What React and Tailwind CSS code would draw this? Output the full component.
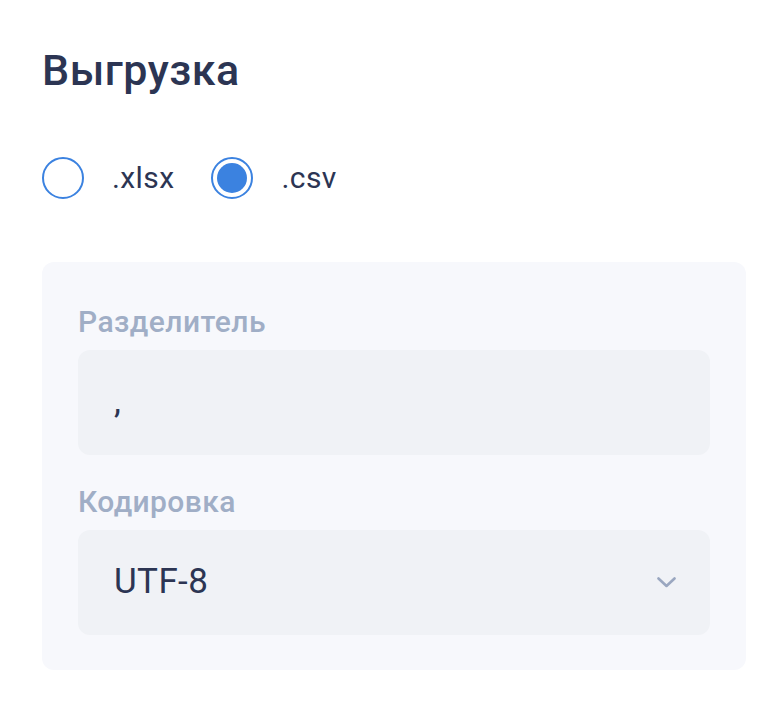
export default function App() {
  return (
    <div className="min-h-[704px] w-[784px] bg-white pl-[42px] pt-[49px]" style={{ fontFamily: "Roboto, 'Noto Sans', sans-serif" }}>
      <h1 className="text-[43px] font-medium leading-[42px] tracking-[0.5px] text-[#2c3553]">Выгрузка</h1>
      <div className="mt-[66px] flex items-center">
        <label className="flex items-center">
          <span className="h-[42px] w-[42px] rounded-full border-2 border-[#3b82e0] bg-white" />
          <span className="ml-[28px] text-[30px] leading-[42px] tracking-[0.4px] text-[#2c3553]">.xlsx</span>
        </label>
        <label className="ml-[37px] flex items-center">
          <span className="flex h-[42px] w-[42px] items-center justify-center rounded-full border-2 border-[#3b82e0] bg-white">
            <span className="h-[30px] w-[30px] rounded-full bg-[#3b82e0]" />
          </span>
          <span className="ml-[28px] text-[30px] leading-[42px] tracking-[0.4px] text-[#2c3553]">.csv</span>
        </label>
      </div>
      <div className="mt-[63px] w-[704px] rounded-[12px] bg-[#f7f8fc] px-[36px] pb-[35px] pt-[44px]">
        <div className="text-[30px] font-medium leading-[32px] tracking-[0.45px] text-[#a0aec6]">Разделитель</div>
        <div className="mt-[12px] flex h-[105px] items-center rounded-[12px] bg-[#f0f2f6] px-[36px] text-[35px] text-[#2c3553]">,</div>
        <div className="mt-[31px] text-[30px] font-medium leading-[32px] tracking-[0.4px] text-[#a0aec6]">Кодировка</div>
        <div className="mt-[12px] flex h-[105px] items-center justify-between rounded-[12px] bg-[#f0f2f6] pl-[36px] pr-[34px] text-[35px] tracking-[0.4px] text-[#2c3553]">
          <span>UTF-8</span>
          <svg width="19" height="11" viewBox="0 0 19 11" fill="none">
            <path d="M1.5 1.5L9.5 9L17.5 1.5" stroke="#9aa7c0" strokeWidth="2.6" strokeLinecap="round" strokeLinejoin="round" />
          </svg>
        </div>
      </div>
    </div>
  );
}
